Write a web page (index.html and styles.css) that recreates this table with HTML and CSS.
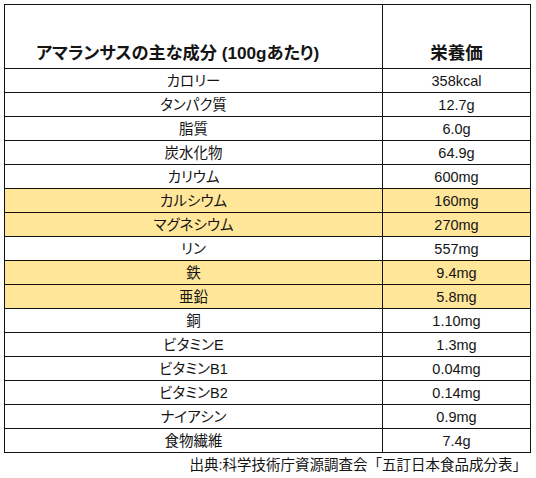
FILE: index.html
```html
<!DOCTYPE html>
<html lang="ja">
<head>
<meta charset="utf-8">
<link rel="stylesheet" href="styles.css">
</head>
<body>
<div class="page">
<table class="nutri">
  <thead>
    <tr>
      <th class="h-name">アマランサスの主な成分 (100gあたり)</th>
      <th class="h-val">栄養価</th>
    </tr>
  </thead>
  <tbody>
    <tr><td>カロリー</td><td>358kcal</td></tr>
    <tr><td>タンパク質</td><td>12.7g</td></tr>
    <tr><td>脂質</td><td>6.0g</td></tr>
    <tr><td>炭水化物</td><td>64.9g</td></tr>
    <tr><td>カリウム</td><td>600mg</td></tr>
    <tr class="hl"><td>カルシウム</td><td>160mg</td></tr>
    <tr class="hl"><td>マグネシウム</td><td>270mg</td></tr>
    <tr><td>リン</td><td>557mg</td></tr>
    <tr class="hl"><td>鉄</td><td>9.4mg</td></tr>
    <tr class="hl"><td>亜鉛</td><td>5.8mg</td></tr>
    <tr><td>銅</td><td>1.10mg</td></tr>
    <tr><td>ビタミンE</td><td>1.3mg</td></tr>
    <tr><td>ビタミンB1</td><td>0.04mg</td></tr>
    <tr><td>ビタミンB2</td><td>0.14mg</td></tr>
    <tr><td>ナイアシン</td><td>0.9mg</td></tr>
    <tr><td>食物繊維</td><td>7.4g</td></tr>
  </tbody>
</table>
<p class="source">出典:科学技術庁資源調査会「五訂日本食品成分表」</p>
</div>
</body>
</html>
```
FILE: styles.css
```css
html, body {
  margin: 0;
  padding: 0;
  background: #ffffff;
}
body {
  font-family: "Liberation Sans", "Noto Sans CJK JP", sans-serif;
  color: #141414;
  font-feature-settings: "palt";
}
.page {
  padding: 4px 0 0 4px;
  width: 527px;
}
.nutri {
  border-collapse: collapse;
  width: 527px;
  table-layout: fixed;
}
.nutri th, .nutri td {
  border: 1px solid #111;
  padding: 0;
}
.nutri th {
  height: 58px;
  vertical-align: bottom;
  padding-bottom: 5px;
  font-weight: bold;
  line-height: 20px;
}
.nutri th.h-name {
  width: 346px;
  text-align: left;
  padding-left: 31px;
  font-size: 17.2px;
}
.nutri th.h-val {
  text-align: center;
  font-size: 17.5px;
}
.nutri td {
  height: 23px;
  text-align: center;
  font-size: 14.5px;
  line-height: 16px;
}
.nutri tr.hl td {
  background: #ffe699;
}
.source {
  margin: 0;
  padding-top: 3px;
  text-align: right;
  font-size: 14.5px;
  line-height: 18px;
  padding-right: 4px;
  font-feature-settings: normal;
}
```
